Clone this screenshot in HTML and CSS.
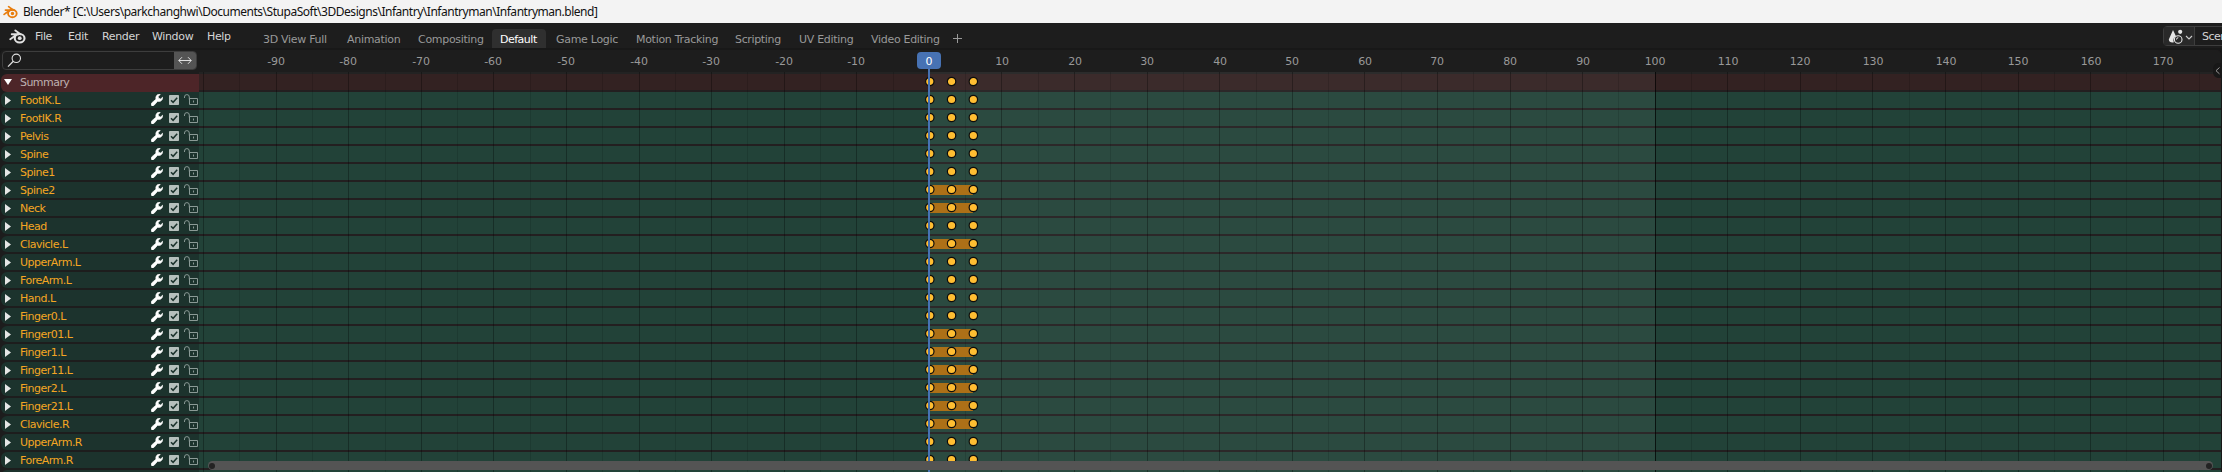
FILE: index.html
```html
<!DOCTYPE html>
<html lang="en">
<head>
<meta charset="utf-8">
<title>Blender</title>
<link rel="stylesheet" href="styles.css">
</head>
<body>
<svg class="defs" width="0" height="0">
  <symbol id="logo" viewBox="0 0 16 14">
    <path d="M1.2 9.6 7.6 4.9M2.6 4.9H9M6 1.3l4.8 3.6" fill="none" stroke="currentColor" stroke-width="1.8" stroke-linecap="round"/>
    <ellipse cx="10" cy="8.6" rx="4.6" ry="4" fill="none" stroke="currentColor" stroke-width="2"/>
    <circle class="pupil" cx="10.1" cy="8.6" r="1.8"/>
  </symbol>
  <symbol id="wrench" viewBox="0 0 12 12">
    <path d="M11.7 3.2 9.6 5 7.5 4.2 7.1 2.4 9.3.4C7.5-.2 5.2.9 4.9 3.3c-.1.8 0 1.4.1 1.9L.7 8.9c-.9.9-.7 1.9-.2 2.5.7.7 1.8.7 2.6-.2L6.6 7.2c2.6.9 5.3-.9 5.1-4z" fill="#fff" stroke="#fff" stroke-width=".7"/>
  </symbol>
  <symbol id="check" viewBox="0 0 10 10">
    <rect width="10" height="10" rx=".8" fill="#b6c0bd"/>
    <path d="M2 5.2 4.1 7.3 8.2 2.8" fill="none" stroke="#1c332d" stroke-width="1.5"/>
  </symbol>
  <symbol id="lock" viewBox="0 0 14 12">
    <path d="M.5 4V3a2.3 2.3 0 0 1 4.8 0v2.5M5.5 4.5h8v6h-8zM9.5 6.5v2" fill="none" stroke="#8b9a96"/>
  </symbol>
</svg>

<header class="titlebar">
  <svg class="app-logo"><use href="#logo"/></svg>
  <span>Blender* [C:\Users\parkchanghwi\Documents\StupaSoft\3DDesigns\Infantry\Infantryman\Infantryman.blend]</span>
</header>

<nav class="topbar">
  <svg class="menu-logo"><use href="#logo"/></svg>
  <div class="menus"><span class="w-file">File</span><span class="w-edit">Edit</span><span class="w-render">Render</span><span class="w-window">Window</span><span>Help</span></div>
  <div class="tabs"><span class="t-view">3D View Full</span><span class="t-anim">Animation</span><span class="t-comp">Compositing</span><span class="active">Default</span><span class="t-game">Game Logic</span><span class="t-motion">Motion Tracking</span><span class="t-script">Scripting</span><span class="t-uv">UV Editing</span><span class="t-video">Video Editing</span></div>
  <svg class="plus" viewBox="0 0 9 9"><path d="M4.5 0v9M0 4.5h9" stroke="#999"/></svg>
  <div class="scene">
    <div class="scene-pick">
      <svg width="26" height="16" viewBox="0 0 26 16"><path d="M5 1 .8 10.5c0 1.8 1.6 3 3.6 3 .6 0 1-.1 1.4-.3A5 5 0 0 1 8 7.2z" fill="#e6e6e6"/><circle cx="12.2" cy="2.8" r="2.1" fill="#e6e6e6"/><circle cx="10.2" cy="10.5" r="3.8" fill="none" stroke="#e6e6e6" stroke-width="1.1"/><path d="M8.5 10.5a1.8 1.8 0 0 1 1.8-1.8" fill="none" stroke="#e6e6e6"/><path d="m18 7 3 3 3-3" fill="none" stroke="#ccc" stroke-width="1.1"/></svg>
    </div>
    <div class="scene-name">Scene</div>
  </div>
</nav>

<main class="editor">
  <aside class="channels">
    <div class="search">
      <svg class="glass" viewBox="0 0 15 15"><circle cx="9.3" cy="5.3" r="4.2" fill="none" stroke="#e0e0e0" stroke-width="1.1"/><path d="M6.3 8.3 1 13.6" stroke="#e0e0e0" stroke-width="1.3"/></svg>
      <div class="swap"><svg width="14" height="9" viewBox="0 0 14 9"><path d="M.8 4.5h12.4M4 1.2.8 4.5 4 7.8M10 1.2l3.2 3.3L10 7.8" fill="none" stroke="#e0e0e0"/></svg></div>
    </div>
    <div class="channel summary"><svg class="arrow down" viewBox="0 0 8 6"><path d="M0 0h8L4 6z" fill="#fff"/></svg><span>Summary</span></div>
    <div id="channels"></div>
  </aside>
  <section class="timeline">
    <div class="ruler" id="ruler"></div>
    <div class="track summary-track"></div>
    <div id="tracks"></div>
    <svg class="overlay" id="overlay" width="2022" height="400"></svg>
    <div class="playhead"><span>0</span></div>
    <svg class="toggle" viewBox="0 0 8 15"><path d="M8 0H5Q0 1 0 6v3q0 5 5 6h3z" fill="#181818"/><path d="M6.5 4.5 3 7.7l3.5 3.2" fill="none" stroke="#999"/></svg>
    <div class="scrollbar"><i></i><i></i></div>
  </section>
</main>
<script src="main.js"></script>
</body>
</html>
```
FILE: styles.css
```css
* { box-sizing: border-box; }
body {
  margin: 0;
  width: 2222px;
  height: 472px;
  overflow: hidden;
  background: #181818;
  font: 11px/16px "DejaVu Sans", sans-serif;
  color: #d5d5d5;
}
.defs { position: absolute; }
.titlebar {
  height: 23px;
  background: #f3f3f3;
  display: flex;
  align-items: center;
  color: #111;
  font: 12px/23px "Noto Sans", sans-serif;
  letter-spacing: -.47px;
  white-space: nowrap;
}
.app-logo { width: 15px; height: 14px; margin: 0 5px 0 3px; color: #e87d0d; }
.app-logo .pupil { fill: #265787; }
.pupil { fill: currentColor; }
.topbar {
  height: 25px;
  background: #1d1d1d;
  display: flex;
  align-items: flex-start;
  white-space: nowrap;
  overflow: hidden;
}
.menu-logo { width: 17px; height: 15px; margin: 6px 0 0 9px; color: #e0e0e0; flex: none; }
.menus { display: flex; width: 237px; padding: 6px 0 0 9px; letter-spacing: -.35px; flex: none; }
.w-file { width: 33px; }
.w-edit { width: 34px; }
.w-render { width: 50px; }
.w-window { width: 55px; }
.tabs { display: flex; padding-top: 6px; color: #999; letter-spacing: -.3px; line-height: 19px; width: 682px; flex: none; }
.tabs span { height: 19px; padding-top: 1px; flex: none; }
.t-view { width: 84px; }
.t-anim { width: 71px; }
.t-comp { width: 74px; }
.tabs .active { width: 54px; padding-left: 8px; margin-right: 10px; background: #2f2f2f; color: #fff; border-radius: 4px 4px 0 0; letter-spacing: -.5px; }
.t-game { width: 80px; }
.t-motion { width: 99px; }
.t-script { width: 64px; letter-spacing: -.35px; }
.t-uv { width: 72px; }
.plus { width: 9px; height: 9px; margin: 11px 0 0 8px; flex: none; }
.scene { display: flex; margin: 3px 0 0 1201px; width: 80px; height: 20px; border: 1px solid #3d3d3d; border-radius: 4px; flex: none; }
.scene-pick { width: 31px; padding: 2px 0 0 4px; background: #292929; border-right: 1px solid #3d3d3d; }
.scene-name { padding: 2px 0 0 7px; letter-spacing: -.5px; }
.editor { margin-top: 2px; height: 422px; display: flex; background: #1d1d1d; width: 2221px; border-radius: 5px 5px 0 0; overflow: hidden; }
.channels { width: 199px; flex: none; padding-left: 1px; background: #1d1d1d; }
.search {
  display: flex;
  justify-content: space-between;
  width: 195px;
  height: 19px;
  margin: 1px 0 4px 1px;
  border: 1px solid #3d3d3d;
  border-radius: 4px;
  overflow: hidden;
}
.glass { width: 15px; height: 15px; margin: 1px 0 0 4px; }
.swap { width: 22px; background: #545454; display: flex; align-items: center; justify-content: center; }
.channel {
  display: flex;
  align-items: center;
  height: 16px;
  margin-bottom: 2px;
  background: #1c332d;
  border-radius: 6px 0 0 6px;
  color: #f5a623;
}
.channel span { width: 131px; padding-top: 1px; letter-spacing: -.5px; white-space: nowrap; }
.summary { height: 18px; margin: 0; background: #4d2528; color: #bdb0b0; }
.channel.summary span { padding: 0; letter-spacing: -.55px; }
.arrow { width: 6px; height: 9px; margin: 0 9px 0 4px; flex: none; }
.down { width: 8px; height: 6px; margin: 0 8px 2px 3px; }
.wrench { width: 12px; height: 12px; flex: none; margin-right: 6px; }
.check { width: 10px; height: 10px; flex: none; margin-right: 5px; }
.lock { width: 14px; height: 12px; flex: none; }
.timeline { position: relative; flex: 1; background: #231f20; overflow: hidden; }
.ruler { height: 24px; border-bottom: 2px solid #232323; background: #1d1d1d; }
.ruler span { position: absolute; top: 4px; width: 40px; margin-left: -20px; text-align: center; color: #999; letter-spacing: -.2px; }
.track { height: 16px; margin-bottom: 2px; background: #224238; }
.summary-track { background: #332222; }
.overlay { position: absolute; left: 0; top: 22px; }
.playhead { position: absolute; left: 718px; top: 2px; width: 24px; height: 420px; }
.playhead span { display: block; height: 17px; background: #4772b3; border-radius: 4px; color: #fff; text-align: center; line-height: 19px; }
.playhead::after { content: ""; position: absolute; left: 11px; top: 17px; width: 2px; bottom: 0; background: #4772b3; }
.toggle { position: absolute; right: 0; top: 13px; width: 8px; height: 15px; }
.scrollbar {
  position: absolute;
  left: 9px;
  top: 411px;
  width: 2005px;
  height: 9px;
  border-radius: 5px;
  background: #545454;
  display: flex;
  justify-content: space-between;
  align-items: center;
  padding: 0 1px;
}
.scrollbar i { width: 6px; height: 6px; border-radius: 50%; background: #232323; }
```
FILE: main.js
```js
const names = ["FootIK.L", "FootIK.R", "Pelvis", "Spine", "Spine1", "Spine2", "Neck", "Head", "Clavicle.L",
  "UpperArm.L", "ForeArm.L", "Hand.L", "Finger0.L", "Finger01.L", "Finger1.L", "Finger11.L", "Finger2.L",
  "Finger21.L", "Clavicle.R", "UpperArm.R", "ForeArm.R"];
const held = new Set(["Spine2", "Neck", "Clavicle.L", "Finger01.L", "Finger1.L", "Finger11.L", "Finger2.L", "Finger21.L", "Clavicle.R"]);

document.getElementById("channels").innerHTML = names.map(n => `
  <div class="channel"><svg class="arrow" viewBox="0 0 6 9"><path d="M0 0 6 4.5 0 9z" fill="#e6e6e6"/></svg><span>${n}</span>
  <svg class="wrench"><use href="#wrench"/></svg><svg class="check"><use href="#check"/></svg><svg class="lock"><use href="#lock"/></svg></div>`).join("")
  + '<div class="channel"></div>';
document.getElementById("tracks").innerHTML = '<div class="track"></div>'.repeat(names.length + 1);

// Frame number to pixels inside the timeline
const x = f => 730.4 + f * 7.258;

let labels = "";
for (let f = -90; f <= 170; f += 10) if (f) labels += `<span style="left:${Math.round(x(f) - (f < 0 ? .5 : 0))}px">${f}</span>`;
document.getElementById("ruler").innerHTML = labels;

let s = `<rect x="730" y="0" width="726" height="400" fill="#fff" fill-opacity=".045"/>`;
for (let f = -100; f <= 175; f += 5) {
  s += `<rect x="${Math.floor(x(f))}" y="0" width="1" height="400" fill="#000" fill-opacity="${f === 100 ? .7 : f % 10 ? .12 : .3}"/>`;
}
["Summary", ...names].forEach((n, i) => {
  const y = 9.5 + 18 * i;
  if (held.has(n)) s += `<rect x="730" y="${y - 4.5}" width="44" height="10" fill="#ad7017"/>`;
  for (const f of [0, 3, 6]) s += `<circle cx="${x(f) + .4}" cy="${y}" r="4.2" fill="#ffbe32" stroke="#0c0c0c" stroke-width="1.2"/>`;
});
document.getElementById("overlay").innerHTML = s;
```
